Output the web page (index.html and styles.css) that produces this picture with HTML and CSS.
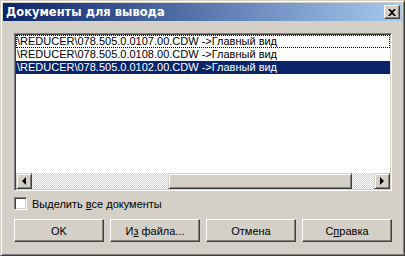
FILE: index.html
```html
<!DOCTYPE html>
<html lang="ru">
<head>
    <meta charset="UTF-8">
    <title>Документы для вывода</title>
    <link rel="stylesheet" href="styles.css">
</head>
<body>
    <div class="window">
        <div class="titlebar">
            <span class="title">Документы для вывода</span>
            <button class="close">
                <svg width="8" height="7" viewBox="0 0 8 7"><path d="M0 0h2l2 2 2-2h2L5 3.5 8 7H6L4 5 2 7H0l3-3.5z" fill="#000"/></svg>
            </button>
        </div>

        <div class="content">
            <div class="listbox">
                <div class="rows">
                    <div class="row focus">\REDUCER\078.505.0.0107.00.CDW -&gt;Главный вид</div>
                    <div class="row">\REDUCER\078.505.0.0108.00.CDW -&gt;Главный вид</div>
                    <div class="row selected">\REDUCER\078.505.0.0102.00.CDW -&gt;Главный вид</div>
                </div>
                <div class="hscroll">
                    <div class="arrow"><span class="tri left"></span></div>
                    <div class="track track-a"></div>
                    <div class="thumb"></div>
                    <div class="track track-b"></div>
                    <div class="arrow"><span class="tri right"></span></div>
                </div>
            </div>

            <label class="check">
                <span class="box"></span>
                <span>Выделить <u>в</u>се документы</span>
            </label>

            <div class="buttons">
                <button class="btn">OK</button>
                <button class="btn">И<u>з</u> файла...</button>
                <button class="btn">Отмена</button>
                <button class="btn">С<u>п</u>равка</button>
            </div>
        </div>
    </div>
</body>
</html>
```

FILE: styles.css
```css
* { margin: 0; padding: 0; box-sizing: border-box; }
body {
    font-family: "Liberation Sans", Arial, sans-serif;
    font-size: 11px;
    color: #000;
    background: #d4d0c8;
}

.window {
    width: 405px;
    height: 256px;
    background: #d4d0c8;
    border: 1px solid;
    border-color: #d4d0c8 #404040 #404040 #d4d0c8;
    box-shadow: inset 1px 1px #fff, inset -1px -1px #808080;
    padding: 2px;
}

.titlebar {
    height: 18px;
    display: flex;
    align-items: center;
    justify-content: space-between;
    padding: 0 2px 0 3px;
    background: linear-gradient(to right, #0a246a, #a6caf0);
}
.title {
    color: #fff;
    font-family: "DejaVu Sans", sans-serif;
    font-weight: bold;
    font-size: 11.5px;
}
.close {
    width: 16px;
    height: 14px;
    display: flex;
    align-items: center;
    justify-content: center;
    background: #d4d0c8;
    border: 1px solid;
    border-color: #fff #404040 #404040 #fff;
    box-shadow: inset -1px -1px #808080;
}

.content {
    padding: 12px 10px 0 11px;
}

.listbox {
    height: 158px;
    display: flex;
    flex-direction: column;
    background: #fff;
    border: 1px solid;
    border-color: #808080 #fff #fff #808080;
    box-shadow: inset 1px 1px #404040, inset -1px -1px #d4d0c8;
    padding: 1px;
}
.rows {
    flex: 1;
    overflow: hidden;
}
.row {
    height: 13px;
    line-height: 13px;
    padding-left: 1px;
    white-space: nowrap;
}
.row.focus {
    outline: 1px dotted #000;
    outline-offset: -1px;
}
.row.selected {
    background: #0a246a;
    color: #fff;
}

.hscroll {
    height: 16px;
    display: flex;
}
.arrow, .thumb {
    background: #d4d0c8;
    border: 1px solid;
    border-color: #d4d0c8 #404040 #404040 #d4d0c8;
    box-shadow: inset 1px 1px #fff, inset -1px -1px #808080;
}
.arrow {
    width: 16px;
    display: flex;
    align-items: center;
    justify-content: center;
}
.tri {
    width: 0;
    height: 0;
    border-top: 4px solid transparent;
    border-bottom: 4px solid transparent;
}
.tri.left { border-right: 4px solid #000; }
.tri.right { border-left: 4px solid #000; }
.track {
    background: conic-gradient(#fff 25%, #d4d0c8 0 50%, #fff 0 75%, #d4d0c8 0);
    background-size: 2px 2px;
}
.track-a { width: 136px; }
.track-b { width: 22px; }
.thumb { width: 184px; }

.check {
    display: flex;
    align-items: center;
    gap: 5px;
    height: 13px;
    margin-top: 6px;
}
.box {
    width: 13px;
    height: 13px;
    background: #fff;
    border: 1px solid;
    border-color: #808080 #fff #fff #808080;
    box-shadow: inset 1px 1px #404040, inset -1px -1px #d4d0c8;
}

.buttons {
    display: flex;
    gap: 6px;
    margin-top: 9px;
}
.btn {
    width: 90px;
    height: 23px;
    font: inherit;
    color: #000;
    background: #d4d0c8;
    border: 1px solid;
    border-color: #fff #404040 #404040 #fff;
    box-shadow: inset -1px -1px #808080;
}
```
